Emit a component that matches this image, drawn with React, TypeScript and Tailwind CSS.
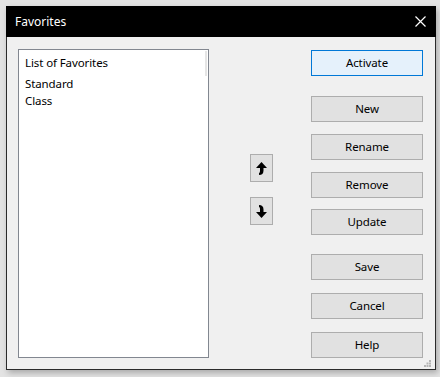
import React from 'react'

const font = { fontFamily: '"Noto Sans", "Open Sans", sans-serif' }

function Btn({ label, top, primary }: { label: string; top: number; primary?: boolean }) {
    return (
        <button
            style={{ marginTop: top }}
            className={`w-[112px] h-[26px] shrink-0 text-[11.5px] tracking-[-0.1px] text-black border ${primary
                ? 'bg-[#e5f1fb] border-[#0078d7]'
                : 'bg-[#e1e1e1] border-[#adadad]'
                }`}
        >
            {label}
        </button>
    )
}

function ArrowBtn({ down, top }: { down?: boolean; top: number }) {
    return (
        <button
            style={{ marginTop: top }}
            className="w-[23px] h-[28px] flex items-center justify-center bg-[#e1e1e1] border border-[#adadad]"
        >
            <svg width="11" height="13" viewBox="0 0 11 13" className={down ? 'scale-y-[-1]' : ''}>
                <path d="M5.5 0 L11 6 L0 6 Z" fill="#000" />
                <path d="M4 5 H7.5 V8.5 Q7.5 13 3 13 V11 Q4 11 4 9 Z" fill="#000" />
            </svg>
        </button>
    )
}

export default function App() {
    return (
        <div className="w-[440px] h-[377px] bg-[#e3e3e3] pt-[6px] pl-[6px] overflow-hidden" style={font}>
            <div className="w-[430px] h-[364px] bg-[#f0f0f0] border border-[#2b2b2b] flex flex-col relative shadow-[2px_3px_6px_rgba(0,0,0,0.25)]">
                {/* title bar */}
                <div className="h-[31px] -mt-px -mx-px bg-black flex items-center justify-between pl-[9px] pr-[10px]">
                    <span className="text-white text-[12px]">Favorites</span>
                    <svg width="11" height="11" viewBox="0 0 11 11">
                        <path d="M0.5 0.5 L10.5 10.5 M10.5 0.5 L0.5 10.5" stroke="#fff" strokeWidth="1.2" />
                    </svg>
                </div>

                <div className="flex flex-1">
                    {/* list */}
                    <div className="ml-[11px] mt-[12px] w-[191px] h-[309px] bg-white border border-[#828790] relative">
                        <div className="absolute right-[1px] top-[1px] w-[2px] h-[25px] bg-[#e5e5e5]" />
                        <div className="pl-[6px] pt-[5px] text-[11.5px] tracking-[-0.1px] text-black leading-[16px]">
                            <div>List of Favorites</div>
                            <div className="mt-[5px]">Standard</div>
                            <div className="mt-[1px]">Class</div>
                        </div>
                    </div>

                    {/* arrows */}
                    <div className="ml-[41px] flex flex-col">
                        <ArrowBtn top={117} />
                        <ArrowBtn down top={15} />
                    </div>

                    {/* buttons */}
                    <div className="ml-[38px] flex flex-col">
                        <Btn label="Activate" top={13} primary />
                        <Btn label="New" top={20} />
                        <Btn label="Rename" top={12} />
                        <Btn label="Remove" top={12} />
                        <Btn label="Update" top={11} />
                        <Btn label="Save" top={19} />
                        <Btn label="Cancel" top={13} />
                        <Btn label="Help" top={13} />
                    </div>
                </div>

                {/* resize grip */}
                <svg width="7" height="7" viewBox="0 0 7 7" className="absolute right-[4px] bottom-[2px]">
                    <rect x="5" y="0" width="2" height="2" fill="#b5b5b5" />
                    <rect x="2.5" y="2.5" width="2" height="2" fill="#b5b5b5" />
                    <rect x="5" y="2.5" width="2" height="2" fill="#b5b5b5" />
                    <rect x="0" y="5" width="2" height="2" fill="#b5b5b5" />
                    <rect x="2.5" y="5" width="2" height="2" fill="#b5b5b5" />
                    <rect x="5" y="5" width="2" height="2" fill="#b5b5b5" />
                </svg>
            </div>
        </div>
    )
}
